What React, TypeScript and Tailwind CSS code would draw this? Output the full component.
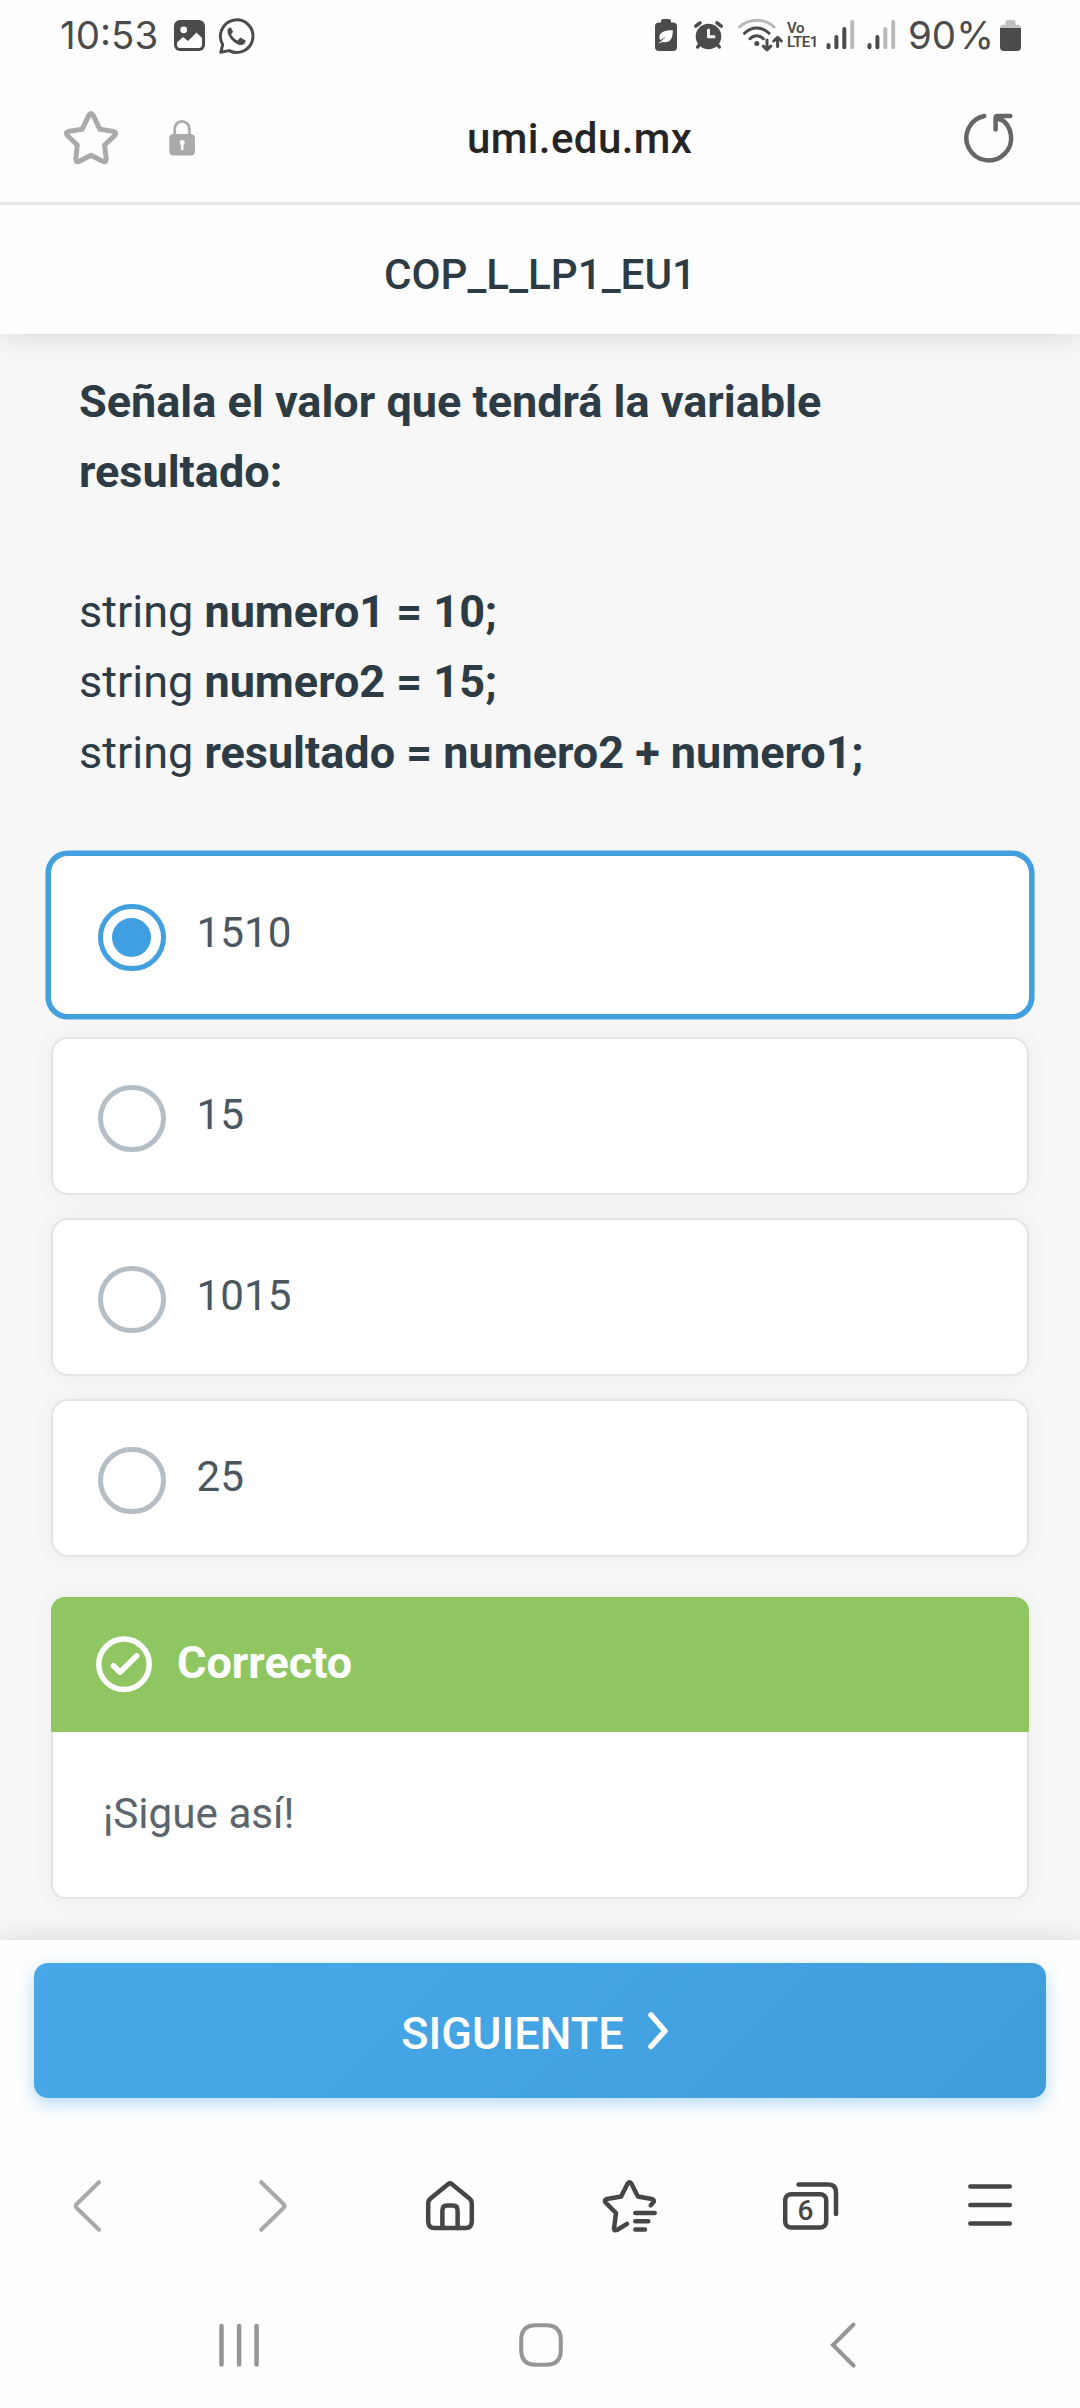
import React from "react";

type IconProps = {
  box: string;
  className: string;
  stroke?: number;
  children: React.ReactNode;
};

/** Outline icon: strokes take the current text colour. */
function Icon({ box, className, stroke = 4.5, children }: IconProps) {
  return (
    <svg
      viewBox={box}
      className={`block shrink-0 overflow-visible ${className}`}
      fill="none"
      stroke="currentColor"
      strokeWidth={stroke}
      strokeLinecap="round"
      strokeLinejoin="round"
    >
      {children}
    </svg>
  );
}

function SignalBars({ level, className }: { level: number; className: string }) {
  const tops = [45, 37, 29, 22];
  return (
    <Icon box="0 18 28 34" className={`h-[34px] w-[28px] ${className}`} stroke={4}>
      {tops.map((top, i) => (
        <path
          key={top}
          d={`M${2.5 + i * 7.9} ${top}V47.2`}
          stroke={i < level ? "#4b4b4b" : "#b9b9b9"}
        />
      ))}
    </Icon>
  );
}

function StatusBar() {
  return (
    <div className="flex h-[70px] shrink-0 items-start text-[#4b4b4b]">
      <span className="ml-[60px] mt-[11px] w-[114px] whitespace-nowrap font-['Inter',sans-serif] text-[38.500px] leading-[48px]">
        10:53
      </span>
      <Icon box="174 20 31 31" className="mt-[20px] h-[31px] w-[31px]" stroke={0}>
        <rect x="174" y="20" width="31" height="31" rx="6" fill="currentColor" />
        <circle cx="183.7" cy="29.8" r="3.4" fill="#fefefe" />
        <path
          d="M177 42.5l6-5.5 5 4 8.500-8.500 5.500 5.500v6.500a3.500 3.500 0 0 1-3.500 3.500h-18a3.500 3.500 0 0 1-3.500-3.500z"
          fill="#fefefe"
        />
      </Icon>
      <Icon box="219 17.5 36 36" className="ml-[14px] mt-[17.5px] h-[36px] w-[36px]" stroke={3}>
        <path d="M220.800 51.800l1.900-7.800a16.300 16.300 0 1 1 6.400 6.100z" />
        <path
          d="M229.300 27.300c-2.600 1.600-2.400 5.400.6 9.700 3.500 4.900 8.200 8 11.700 7.500 2.600-.4 4.300-2.200 4-4.600l-5.400-2.800-2.500 2.800c-3-1.200-5.100-3.200-6.600-6.200l2-2.500-2.200-4.300z"
          fill="currentColor"
          strokeWidth={0}
        />
      </Icon>

      <Icon box="655 19 22 32" className="ml-[400px] mt-[19px] h-[32px] w-[22px]" stroke={0}>
        <rect x="661" y="19" width="10" height="6" rx="2" fill="currentColor" />
        <rect x="655" y="22.500" width="22" height="28.500" rx="4" fill="currentColor" />
        <path
          d="M672.800 30.300c-7-.6-13.400 1.500-13.400 6.800 0 1.600.4 2.300.9 3l5.800-3.300-6 5.200-2 1.300c1.700 0 3.500-1.300 4.500-1.300 7.500 1.500 10.200-3.200 10.200-11.700z"
          fill="#fefefe"
        />
      </Icon>
      <Icon box="694 20 29 30" className="ml-[17px] mt-[20px] h-[30px] w-[29px]" stroke={3.500}>
        <circle cx="708.500" cy="36.500" r="12.800" fill="currentColor" strokeWidth={0} />
        <path d="M695.800 26.200l4.200-3.400M721.200 26.200l-4.200-3.400M700 44l-2.300 3M717 44l2.300 3" />
        <path d="M708.500 30v6.800h5.500" stroke="#fefefe" strokeWidth={3} />
      </Icon>
      <Icon box="738 18 45 34" className="ml-[15px] mt-[18px] h-[34px] w-[45px]" stroke={3}>
        <path d="M739.500 27c10-9 25-9 34.500 0" stroke="#b9b9b9" />
        <path d="M744.500 33.300c7-7 17.500-7 24.500 0M750 38.700c4-4 9.500-4 13.500 0" />
        <circle cx="756.800" cy="43.600" r="2.500" fill="currentColor" strokeWidth={0} />
        <path d="M767 40v9.500M763.200 46.200l3.800 3.600 3.800-3.600M777.600 46.500v-9M773.800 41l3.800-3.600 3.800 3.600" />
      </Icon>
      <span className="ml-[4px] mt-[22px] flex h-[28px] w-[37px] flex-col whitespace-nowrap text-[15px] font-semibold leading-[13.500px] tracking-[-0.400px]">
        <span>Vo</span>
        <span>LTE1</span>
      </span>
      <SignalBars level={3} className="ml-[2px] mt-[18px]" />
      <SignalBars level={2} className="ml-[13px] mt-[18px]" />
      <span className="ml-[13px] mt-[11px] w-[92px] whitespace-nowrap font-['Inter',sans-serif] text-[38.500px] leading-[48px]">
        90%
      </span>
      <Icon box="1000 19.500 21 31" className="mt-[19.500px] h-[31px] w-[21px]" stroke={0}>
        <rect x="1005.500" y="19.500" width="10" height="8" rx="2" fill="#c0c0c0" />
        <path d="M1000 27.500a3.500 3.500 0 0 1 3.500-3.300h14a3.500 3.500 0 0 1 3.500 3.300z" fill="#c0c0c0" />
        <path d="M1000 27.500h21v19a4 4 0 0 1-4 4h-13a4 4 0 0 1-4-4z" fill="currentColor" />
      </Icon>
    </div>
  );
}

function AddressBar() {
  return (
    <div className="flex h-[135px] shrink-0 items-start border-b-[3px] border-[#e5e5e5]">
      <Icon box="64 111 54 54" className="ml-[64px] mt-[41px] h-[54px] w-[54px] text-[#aaaaaa]" stroke={5}>
        <path d="M88.800 115.400q2.200-3.600 4.400 0L99.900 129.300L113.400 131.400Q117.300 132.300 114.700 135.500L104.600 145L106.200 158.800Q106.200 162.800 102.600 161.300L91 155.200L79.400 161.300Q75.800 162.800 75.800 158.800L77.300 145L67.300 135.500Q64.700 132.300 68.600 131.400L82.100 129.300Z" />
      </Icon>
      <Icon box="169 120 26 36" className="ml-[51px] mt-[50px] h-[36px] w-[26px] text-[#aaaaaa]" stroke={2.800}>
        <path d="M174.700 136v-7.300a7.300 7.300 0 0 1 14.600 0v7.300" />
        <rect x="169.300" y="134" width="25.600" height="21.600" rx="4" fill="currentColor" strokeWidth={0} />
        <circle cx="182.200" cy="142.400" r="2.500" fill="#fefefe" strokeWidth={0} />
        <path d="M182.200 142v7" stroke="#fefefe" strokeWidth={2.500} />
      </Icon>
      <span className="ml-[272px] mt-[45px] w-[497px] whitespace-nowrap text-[42px] font-medium leading-[48px] tracking-[0.400px] text-[#252525]">
        umi.edu.mx
      </span>
      <Icon box="964 113 50 51" className="mt-[43px] h-[51px] w-[50px] text-[#666666]">
        <path d="M984.300 116A22.400 22.400 0 1 0 999.500 118.300" />
        <path d="M1010.300 116H997.500Q995.600 116 995.600 118V129.500M997 117.500L1001 120" />
      </Icon>
    </div>
  );
}

const options = ["1510", "15", "1015", "25"];

function Option({ label, selected }: { label: string; selected: boolean }) {
  return (
    <div
      className={`flex h-[158.500px] items-start rounded-[17px] border-2 bg-white pl-[45px] ${
        selected
          ? "border-white shadow-[0_0_0_5.600px_#43a0df]"
          : "border-[#e5e5e5] shadow-[0_0_22px_rgba(0,0,0,0.05)]"
      }`}
    >
      <span
        className={`mt-[46px] flex size-[67.500px] shrink-0 items-center justify-center rounded-full border-[5.600px] ${
          selected ? "border-[#43a0df]" : "border-[#b5bec5]"
        }`}
      >
        {selected && <span className="size-[39px] rounded-full bg-[#3f9fe0]" />}
      </span>
      <span
        className={`ml-[31px] text-[42.200px] leading-[56px] text-[#4b575f] ${selected ? "mt-[47px]" : "mt-[48px]"}`}
      >
        {label}
      </span>
    </div>
  );
}

function BrowserNav() {
  return (
    <div className="flex h-[120px] shrink-0 items-start pt-[29px] text-[#464646]">
      <Icon box="74 2180 27 52" className="ml-[74px] h-[52px] w-[27px] text-[#a8a8a8]" stroke={4}>
        <path d="M99 2182.200L76.500 2204.300Q75 2206 76.500 2207.700L99 2229.800" />
      </Icon>
      <Icon box="259 2180 27 52" className="ml-[158px] h-[52px] w-[27px] text-[#a8a8a8]" stroke={4}>
        <path d="M261.200 2182.200L283.700 2204.300Q285.200 2206 283.700 2207.700L261.200 2229.800" />
      </Icon>
      <Icon box="426 2180 48 52" className="ml-[140px] h-[52px] w-[48px]">
        <path d="M448 2184.200Q450 2182.600 452 2184.200L469.500 2198.500Q471.800 2200.500 471.800 2203.500V2221.500Q471.800 2228 465.500 2228H434.500Q428.200 2228 428.200 2221.500V2203.500Q428.200 2200.500 430.500 2198.500Z" />
        <path d="M442.400 2228V2210.500Q442.400 2205.500 447 2205.500H453Q457.600 2205.500 457.600 2210.500V2228" />
      </Icon>
      <Icon box="603 2180 54 52" className="ml-[129px] h-[52px] w-[54px]">
        <path d="M650.800 2205.300L653.200 2202.600Q655 2199.800 651.800 2199L637.900 2196.500L631.300 2183.500Q629.500 2181 627.700 2183.500L621.100 2196.500L607 2199Q603.800 2199.800 605.600 2202.600L616 2213L614 2228.500Q614.200 2231 617 2230L627 2223.800" />
        <path d="M635.300 2213H654.700M635.300 2221.300H648.300M635.300 2229.600H645" />
      </Icon>
      <div className="relative ml-[126px] h-[52px] w-[55px]">
        <Icon box="783 2180 55 52" className="h-[52px] w-[55px]">
          <rect x="785.200" y="2194.200" width="41" height="33.400" rx="6" />
          <path d="M798.500 2184.400H828.500Q836 2184.400 836 2192.500V2214" />
        </Icon>
        <span className="absolute left-0 top-[14px] w-[45px] text-center text-[28px] font-medium leading-[34px]">6</span>
      </div>
      <Icon box="968 2180 44 52" className="ml-[130px] h-[52px] w-[44px]">
        <path d="M970.300 2186.600H1009.800M970.300 2205H1009.800M970.300 2223.400H1009.800" />
      </Icon>
    </div>
  );
}

function SystemNav() {
  return (
    <div className="flex h-[137px] shrink-0 items-start pt-[51px] text-[#959595]">
      <Icon box="219 2322 40 46" className="ml-[219px] h-[46px] w-[40px]">
        <path d="M221.500 2326V2364.500M239.100 2326V2364.500M256.600 2326V2364.500" />
      </Icon>
      <Icon box="519 2322 44 46" className="ml-[260px] h-[46px] w-[44px]" stroke={4}>
        <path d="M541 2325.200H546Q560.800 2325.200 560.800 2340V2350Q560.800 2364.800 546 2364.800H536Q521.200 2364.800 521.200 2350V2340Q521.200 2325.200 536 2325.200Z" />
      </Icon>
      <Icon box="831 2322 24 46" className="ml-[268px] h-[46px] w-[24px]" stroke={4}>
        <path d="M853.500 2324.500L833 2345L853.500 2365.500" strokeLinejoin="miter" />
      </Icon>
    </div>
  );
}

export default function App() {
  return (
    <div className="flex h-[2408px] w-[1080px] flex-col overflow-hidden bg-[#fefefe] font-['Roboto',sans-serif]">
      <StatusBar />
      <AddressBar />

      <header className="relative z-10 flex h-[129px] shrink-0 items-center justify-center bg-[#fefefe] pt-[11px] shadow-[0_0_28px_rgba(0,0,0,0.14)] [clip-path:inset(0_0_-50px_0)]">
        <h1 className="text-[42.200px] font-medium leading-[56px] text-[#2d3b45]">COP_L_LP1_EU1</h1>
      </header>

      <main className="h-[1606px] shrink-0 bg-[#f7f7f7] px-[51px] pt-[32.500px]">
        <div className="px-[28px] text-[45px] leading-[70.200px] text-[#2d3b45]">
          <p className="font-bold">
            Señala el valor que tendrá la variable
            <br />
            resultado:
          </p>
          <p className="mt-[70.200px]">
            string <b>numero1 = 10;</b>
            <br />
            string <b>numero2 = 15;</b>
            <br />
            string <b>resultado = numero2 + numero1;</b>
          </p>
        </div>

        <div className="mt-[68.200px] flex flex-col gap-[22.500px]">
          {options.map((label, i) => (
            <Option key={label} label={label} selected={i === 0} />
          ))}
        </div>

        <section className="mt-[39.800px] rounded-[14px] shadow-[0_0_22px_rgba(0,0,0,0.05)]">
          <div className="flex h-[135px] items-center rounded-t-[14px] bg-[#8fc662] pl-[45px] text-white">
            <Icon box="96 1636 56 57" className="h-[57px] w-[56px]" stroke={5.500}>
              <circle cx="124" cy="1664.300" r="25.200" />
              <path d="M113.500 1665.700L120 1672.200L136.700 1655.800" />
            </Icon>
            <span className="ml-[25px] mt-[-3px] text-[45px] font-bold leading-[60px]">Correcto</span>
          </div>
          <div className="h-[167px] rounded-b-[14px] border-2 border-t-0 border-[#e5e5e5] bg-white pl-[50px] pt-[53.500px] text-[42.200px] leading-[56px] text-[#5a656d]">
            ¡Sigue así!
          </div>
        </section>
      </main>

      <footer className="relative z-10 h-[211px] shrink-0 bg-[#fefefe] px-[34px] pt-[23px] shadow-[0_0_28px_rgba(0,0,0,0.14)] [clip-path:inset(-50px_0_0_0)]">
        <button className="flex h-[135px] w-full items-center justify-center rounded-[14px] bg-[linear-gradient(135deg,#49a9e8,#3f9ddc)] pr-[11px] text-white shadow-[0_6px_17px_rgba(73,169,232,0.4)]">
          <span className="mt-[7px] text-[45px] font-medium leading-[60px]">SIGUIENTE</span>
          <Icon box="648 2012 20 38" className="ml-[24px] h-[38px] w-[20px]" stroke={5.500}>
            <path d="M651 2015L665 2031L651 2046.500" />
          </Icon>
        </button>
      </footer>

      <BrowserNav />
      <SystemNav />
    </div>
  );
}
